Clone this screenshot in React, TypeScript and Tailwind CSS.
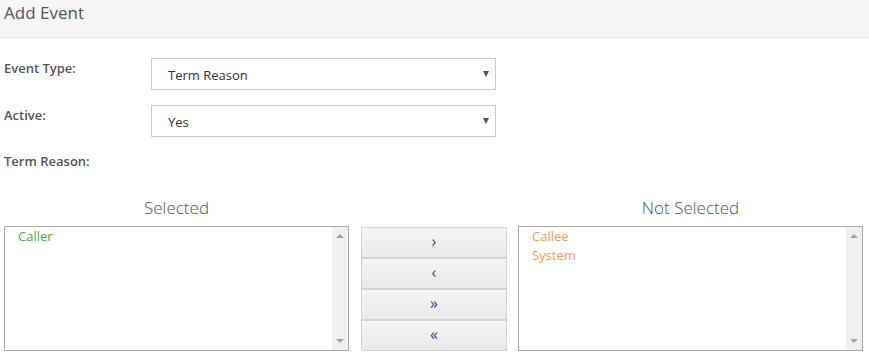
import React from "react";

const font = { fontFamily: '"Open Sans", "Noto Sans", sans-serif' };

function Select({ value }: { value: string }) {
  return (
    <div className="relative flex h-[32px] w-[345px] items-center border border-[#cccccc] bg-white pl-[16px] pt-[3px] text-[13px] text-[#333333]">
      <span>{value}</span>
      <span className="absolute right-[6px] top-[12px] h-0 w-0 border-l-[3.5px] border-r-[3.5px] border-t-[6px] border-l-transparent border-r-transparent border-t-[#555555]" />
    </div>
  );
}

function ListBox({ items, color }: { items: string[]; color: string }) {
  return (
    <div className="flex h-[125px] w-[345px] border border-[#a9a9a9] bg-white">
      <div className="flex-1 pl-[13px] text-[13px] leading-[19px]">
        {items.map((i) => (
          <div key={i} className={color}>
            {i}
          </div>
        ))}
      </div>
      <div className="flex w-[16px] flex-col items-center justify-between bg-[#f0f0f0] py-[7px]">
        <span className="h-0 w-0 border-b-[4px] border-l-[4px] border-r-[4px] border-b-[#a3a3a3] border-l-transparent border-r-transparent" />
        <span className="h-0 w-0 border-t-[4px] border-l-[4px] border-r-[4px] border-t-[#a3a3a3] border-l-transparent border-r-transparent" />
      </div>
    </div>
  );
}

function Btn({ children }: { children: React.ReactNode }) {
  return (
    <div className="flex h-[31px] items-center justify-center border border-[#d4d4d4] bg-gradient-to-b from-[#f5f5f5] to-[#e9e9e9] pb-[2px] text-[16px] leading-none text-[#2f4a75]">
      {children}
    </div>
  );
}

export default function App() {
  return (
    <div className="h-[354px] w-[869px] bg-white" style={font}>
      <div className="flex h-[38px] items-start border-b border-[#e5e5e5] bg-[#f6f6f6] pl-[4px] text-[17px] text-[#555555]">
        Add Event
      </div>
      <div className="pl-[4px] pt-[20px]">
        <div className="flex h-[32px] items-start">
          <div className="w-[147px] pt-[1px] text-[13px] font-semibold text-[#555555]">Event Type:</div>
          <Select value="Term Reason" />
        </div>
        <div className="mt-[15px] flex h-[32px] items-start">
          <div className="w-[147px] pt-[1px] text-[13px] font-semibold text-[#555555]">Active:</div>
          <Select value="Yes" />
        </div>
        <div className="mt-[15px] text-[13px] font-semibold text-[#555555]">Term Reason:</div>
        <div className="mt-[23px] flex">
          <div className="flex flex-col">
            <div className="mb-[6px] text-center text-[17px] font-light text-[#555555]">Selected</div>
            <ListBox items={["Caller"]} color="text-[#4cae4c]" />
          </div>
          <div className="ml-[12px] mr-[11px] mt-[32px] flex w-[146px] flex-col">
            <Btn>›</Btn>
            <Btn>‹</Btn>
            <Btn>»</Btn>
            <Btn>«</Btn>
          </div>
          <div className="flex flex-col">
            <div className="mb-[6px] text-center text-[17px] font-light text-[#555555]">Not Selected</div>
            <ListBox items={["Callee", "System"]} color="text-[#f0a050]" />
          </div>
        </div>
      </div>
    </div>
  );
}
